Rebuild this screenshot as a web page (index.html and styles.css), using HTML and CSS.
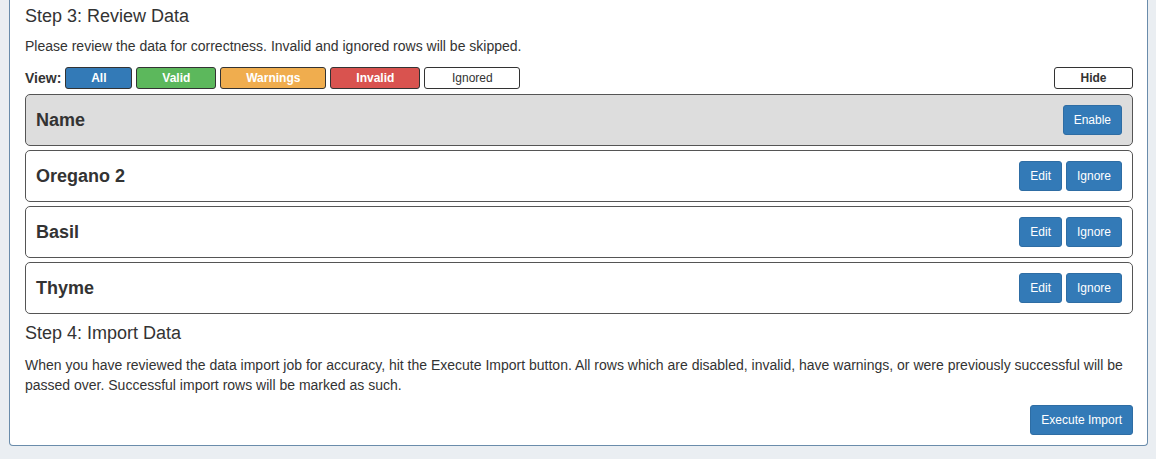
FILE: index.html
```html
<!DOCTYPE html>
<html>
<head>
    <title>Data Import</title>
    <link rel="stylesheet" href="styles.css">
</head>
<body>
    <div class="panel">
        <!-- Step 3 -->
        <h3>Step 3: Review Data</h3>
        <p>Please review the data for correctness. Invalid and ignored rows will be skipped.</p>

        <div class="view-bar">
            <span class="view-label">View:</span>
            <button class="filter filter-all">All</button>
            <button class="filter filter-valid">Valid</button>
            <button class="filter filter-warn">Warnings</button>
            <button class="filter filter-invalid">Invalid</button>
            <button class="filter filter-ignored">Ignored</button>
            <button class="filter filter-hide">Hide</button>
        </div>

        <div class="rows">
            <div class="row row-header">
                <span class="row-title">Name</span>
                <div class="row-actions">
                    <button class="btn">Enable</button>
                </div>
            </div>
            <div class="row">
                <span class="row-title">Oregano 2</span>
                <div class="row-actions">
                    <button class="btn">Edit</button>
                    <button class="btn">Ignore</button>
                </div>
            </div>
            <div class="row">
                <span class="row-title">Basil</span>
                <div class="row-actions">
                    <button class="btn">Edit</button>
                    <button class="btn">Ignore</button>
                </div>
            </div>
            <div class="row">
                <span class="row-title">Thyme</span>
                <div class="row-actions">
                    <button class="btn">Edit</button>
                    <button class="btn">Ignore</button>
                </div>
            </div>
        </div>

        <!-- Step 4 -->
        <h3 class="step4">Step 4: Import Data</h3>
        <p class="import-text">When you have reviewed the data import job for accuracy, hit the Execute Import button. All rows which are disabled, invalid, have warnings, or were previously successful will be passed over. Successful import rows will be marked as such.</p>

        <div class="footer">
            <button class="btn">Execute Import</button>
        </div>
    </div>
</body>
</html>
```

FILE: styles.css
```css
body {
    font-family: "Liberation Sans", Arial, sans-serif;
    background-color: #eaeef2;
    color: #333;
    margin: 0;
    padding: 0 8px 0 9px;
}
.panel {
    background-color: #ffffff;
    border: 1px solid #6a8cab;
    border-top: none;
    border-radius: 0 0 4px 4px;
    padding: 5px 14px 10px 15px;
}
h3 {
    font-size: 18px;
    font-weight: normal;
    line-height: 22px;
    margin: 0;
}
p {
    font-size: 14px;
    line-height: 20px;
    margin: 9px 0 0 0;
}
.view-bar {
    display: flex;
    align-items: center;
    gap: 4px;
    margin-top: 11px;
}
.view-label {
    font-size: 14px;
    font-weight: bold;
}
.filter {
    font-family: "Liberation Sans", Arial, sans-serif;
    font-size: 12px;
    font-weight: bold;
    line-height: 20px;
    height: 22px;
    padding: 0 10px;
    border: 1px solid #333;
    border-radius: 3px;
    color: #ffffff;
    cursor: pointer;
}
.filter-all {
    width: 67px;
    background-color: #337ab7;
}
.filter-valid {
    width: 80px;
    background-color: #5cb85c;
}
.filter-warn {
    width: 106px;
    background-color: #f0ad4e;
}
.filter-invalid {
    width: 90px;
    background-color: #d9534f;
}
.filter-ignored {
    width: 96px;
    background-color: #ffffff;
    color: #333;
    font-weight: normal;
}
.filter-hide {
    width: 79px;
    margin-left: auto;
    background-color: #ffffff;
    color: #333;
}
.rows {
    display: flex;
    flex-direction: column;
    gap: 4px;
    margin-top: 5px;
}
.row {
    display: flex;
    align-items: center;
    justify-content: space-between;
    border: 1px solid #555;
    border-radius: 5px;
    padding: 10px;
}
.row-header {
    background-color: #dddddd;
}
.row-title {
    font-size: 18px;
    font-weight: bold;
}
.row-actions {
    display: flex;
    gap: 4px;
}
.btn {
    font-family: "Liberation Sans", Arial, sans-serif;
    font-size: 12px;
    line-height: 18px;
    height: 30px;
    padding: 5px 10px;
    color: #ffffff;
    background-color: #337ab7;
    border: 1px solid #2e6da4;
    border-radius: 3px;
    cursor: pointer;
}
.step4 {
    margin-top: 8px;
}
.import-text {
    margin-top: 11px;
}
.footer {
    display: flex;
    justify-content: flex-end;
    margin-top: 10px;
}
```
